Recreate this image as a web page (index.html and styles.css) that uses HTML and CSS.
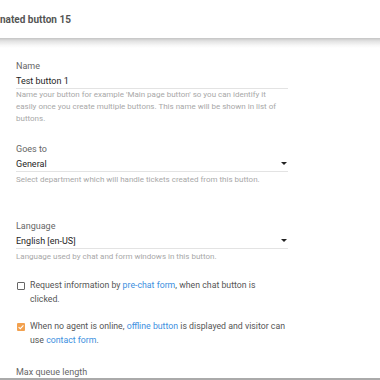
FILE: index.html
```html
<!DOCTYPE html>
<html>
<head>
<meta charset="utf-8">
<link rel="stylesheet" href="styles.css">
</head>
<body>
<header class="topbar">
  <h1 class="title">nated button 15</h1>
</header>
<div class="shadow"></div>
<main class="form">
  <div class="field">
    <div class="label">Name</div>
    <div class="input flush"><span class="value">Test button 1</span></div>
    <div class="help">Name your button for example 'Main page button' so you can identify it easily once you create multiple buttons. This name will be shown in list of buttons.</div>
  </div>
  <div class="field gap-big">
    <div class="label">Goes to</div>
    <div class="input"><span class="value">General</span><span class="caret"></span></div>
    <div class="help">Select department which will handle tickets created from this button.</div>
  </div>
  <div class="field gap-huge">
    <div class="label">Language</div>
    <div class="input"><span class="value">English [en-US]</span><span class="caret"></span></div>
    <div class="help">Language used by chat and form windows in this button.</div>
  </div>
  <div class="check first">
    <span class="box"></span>
    <span class="ctext">Request information by <a class="link">pre-chat form</a>, when chat button is clicked.</span>
  </div>
  <div class="check second">
    <span class="box on"><svg width="8" height="8" viewBox="0 0 8 8"><path d="M1.6 4.1 L3.3 5.7 L6.4 2.4" fill="none" stroke="#fff" stroke-width="1.1"/></svg></span>
    <span class="ctext">When no agent is online, <a class="link">offline button</a> is displayed and visitor can use <a class="link">contact form</a>.</span>
  </div>
  <div class="field last">
    <div class="label">Max queue length</div>
  </div>
</main>
<div class="bottombar"></div>
</body>
</html>
```
FILE: styles.css
```css
html, body {
  margin: 0;
  padding: 0;
  background: #fff;
  font-family: Roboto, "Liberation Sans", Arial, sans-serif;
  overflow: hidden;
  height: 380px;
}
body {
  display: flex;
  flex-direction: column;
}
.topbar {
  height: 38px;
  display: flex;
  align-items: center;
  flex-shrink: 0;
}
.title {
  margin: 0;
  font-size: 10px;
  font-weight: 700;
  color: #555;
  line-height: 12px;
  padding-top: 1px;
}
.shadow {
  height: 10px;
  flex-shrink: 0;
  background: linear-gradient(#c4c4c4, #e2e2e2 30%, #f8f8f8 75%, #fff);
}
.form {
  flex: 1;
  min-height: 0;
  padding: 12px 92px 0 16px;
  display: flex;
  flex-direction: column;
}
.field {
  display: flex;
  flex-direction: column;
}
.label {
  font-size: 9px;
  line-height: 12px;
  color: #666;
}
.input {
  display: flex;
  align-items: center;
  justify-content: space-between;
  border-bottom: 1px solid #e3e3e3;
  height: 15px;
  padding-top: 1px;
  margin-bottom: 2px;
}
.input.flush {
  margin-bottom: 0;
}
.value {
  font-size: 9px;
  color: #1e1e1e;
  line-height: 12px;
}
.caret {
  width: 0;
  height: 0;
  border-left: 3px solid transparent;
  border-right: 3px solid transparent;
  border-top: 3px solid #222;
  margin-right: 1px;
}
.help {
  font-size: 8px;
  line-height: 12px;
  color: #a8a8a8;
}
.gap-big {
  margin-top: 18px;
}
.gap-huge {
  margin-top: 34px;
}
.check {
  display: flex;
  align-items: flex-start;
  gap: 5px;
  padding-left: 1px;
  padding-right: 2px;
}
.check.first {
  margin-top: 17px;
}
.check.second {
  margin-top: 15px;
}
.box {
  width: 6px;
  height: 6px;
  border: 1px solid #666;
  border-radius: 1px;
  margin-top: 2px;
  flex-shrink: 0;
  display: flex;
  align-items: center;
  justify-content: center;
}
.box.on {
  width: 8px;
  height: 8px;
  border: none;
  background: #f2a14f;
}
.ctext {
  font-size: 8.75px;
  line-height: 14px;
  color: #555;
  margin-top: -2px;
}
.link {
  color: #3d8fe0;
}
.last {
  margin-top: 19px;
}
.bottombar {
  height: 2px;
  background: #aaa;
  flex-shrink: 0;
}
```
